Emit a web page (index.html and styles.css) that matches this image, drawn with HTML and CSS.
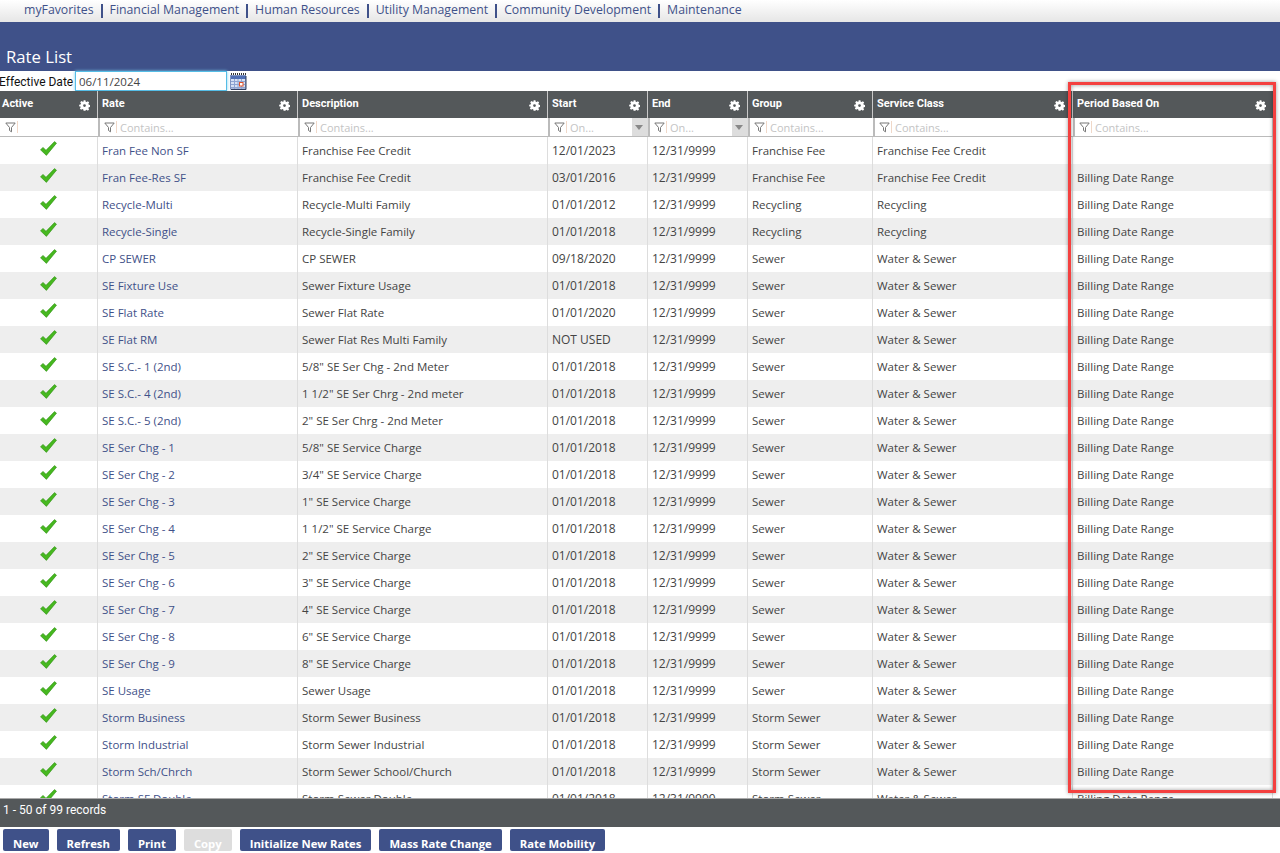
FILE: index.html
```html
<!DOCTYPE html>
<html lang="en">
<head>
  <meta charset="UTF-8" />
  <meta name="viewport" content="width=device-width, initial-scale=1.0" />
  <title>Rate List</title>
  <link rel="stylesheet" href="styles.css">
</head>
<body>
  <svg class="defs" width="0" height="0">
    <symbol id="gear" viewBox="0 0 12 12">
      <path fill="#fff" fill-rule="evenodd" d="M5 .2h2l.3 1.600 1.100.5 1.300-.9 1.400 1.400-.9 1.300.5 1.100 1.500.3v2l-1.500.3-.5 1.100.9 1.300-1.400 1.400-1.300-.9-1.100.5L7 11.800H5l-.3-1.500-1.100-.5-1.300.9-1.400-1.400.9-1.300-.5-1.100L.2 7.200v-2l1.500-.3.5-1.100-.9-1.300L2.700 1.100l1.300.9 1.100-.5zM6 4.500a1.500 1.500 0 1 0 0 3 1.500 1.500 0 0 0 0-3z"/>
    </symbol>
    <symbol id="funnel" viewBox="0 0 11 11">
      <path fill="none" stroke="#777" d="M.8 1h9.400L6.500 5.500v4.300L4.500 8.500v-3z"/>
    </symbol>
    <symbol id="check" viewBox="0 0 17 15">
      <path fill="#46b81f" stroke="#2f8f14" stroke-width=".6" d="M.5 8.800L3 6.400l3 2.900L14.500.6 16.500 2.200 6.400 14.400z"/>
    </symbol>
  </svg>

  <div class="page">
    <nav class="topnav">
      <a>myFavorites</a>
      <a>Financial Management</a>
      <a>Human Resources</a>
      <a>Utility Management</a>
      <a>Community Development</a>
      <a>Maintenance</a>
    </nav>
    <header class="banner"><h1>Rate List</h1></header>

    <div class="date-row">
      <label>Effective Date</label>
      <input class="date-input" type="text" value="06/11/2024" />
      <svg class="cal" width="17" height="17" viewBox="0 0 17 17">
        <path fill="none" stroke="#333" stroke-dasharray="1 1" d="M1 .5h15M1 1.500h15"/>
        <rect x=".5" y="2.500" width="15" height="13.500" fill="#d5e0f3" stroke="#7f93c0"/>
        <rect x="1" y="3" width="15" height="3" fill="#4f6fb5"/>
        <path fill="none" stroke="#8ea4d2" d="M1 8.500h15M1 11.500h15M1 14.500h15M4.500 6v10M8 6v10M11.500 6v10"/>
        <path fill="none" stroke="#33405f" d="M16 3v13.500H1"/>
        <rect x="9.500" y="9.500" width="3.500" height="3.500" fill="#fff" stroke="#e0522a"/>
      </svg>
    </div>

    <div class="grid-wrap">
      <table class="grid">
        <colgroup>
          <col class="c-active"><col class="c-rate"><col class="c-desc"><col class="c-date"><col class="c-date"><col class="c-group"><col class="c-wide"><col class="c-wide">
        </colgroup>
        <thead>
          <tr class="head-row">
            <th>Active<svg class="gear"><use href="#gear"/></svg></th>
            <th>Rate<svg class="gear"><use href="#gear"/></svg></th>
            <th>Description<svg class="gear"><use href="#gear"/></svg></th>
            <th>Start<svg class="gear"><use href="#gear"/></svg></th>
            <th>End<svg class="gear"><use href="#gear"/></svg></th>
            <th>Group<svg class="gear"><use href="#gear"/></svg></th>
            <th>Service Class<svg class="gear"><use href="#gear"/></svg></th>
            <th>Period Based On<svg class="gear"><use href="#gear"/></svg></th>
          </tr>
          <tr class="filter-row">
            <td><svg class="funnel"><use href="#funnel"/></svg><i class="pipe"></i></td>
            <td><svg class="funnel"><use href="#funnel"/></svg><i class="pipe"></i>Contains...</td>
            <td><svg class="funnel"><use href="#funnel"/></svg><i class="pipe"></i>Contains...</td>
            <td><svg class="funnel"><use href="#funnel"/></svg><i class="pipe"></i>On...<span class="drop"></span></td>
            <td><svg class="funnel"><use href="#funnel"/></svg><i class="pipe"></i>On...<span class="drop"></span></td>
            <td><svg class="funnel"><use href="#funnel"/></svg><i class="pipe"></i>Contains...</td>
            <td><svg class="funnel"><use href="#funnel"/></svg><i class="pipe"></i>Contains...</td>
            <td><svg class="funnel"><use href="#funnel"/></svg><i class="pipe"></i>Contains...</td>
          </tr>
        </thead>
        <tbody>
          <tr><td class="ok"><svg class="check"><use href="#check"/></svg></td><td><a>Fran Fee Non SF</a></td><td>Franchise Fee Credit</td><td>12/01/2023</td><td>12/31/9999</td><td>Franchise Fee</td><td>Franchise Fee Credit</td><td></td></tr>
          <tr><td class="ok"><svg class="check"><use href="#check"/></svg></td><td><a>Fran Fee-Res SF</a></td><td>Franchise Fee Credit</td><td>03/01/2016</td><td>12/31/9999</td><td>Franchise Fee</td><td>Franchise Fee Credit</td><td>Billing Date Range</td></tr>
          <tr><td class="ok"><svg class="check"><use href="#check"/></svg></td><td><a>Recycle-Multi</a></td><td>Recycle-Multi Family</td><td>01/01/2012</td><td>12/31/9999</td><td>Recycling</td><td>Recycling</td><td>Billing Date Range</td></tr>
          <tr><td class="ok"><svg class="check"><use href="#check"/></svg></td><td><a>Recycle-Single</a></td><td>Recycle-Single Family</td><td>01/01/2018</td><td>12/31/9999</td><td>Recycling</td><td>Recycling</td><td>Billing Date Range</td></tr>
          <tr><td class="ok"><svg class="check"><use href="#check"/></svg></td><td><a>CP SEWER</a></td><td>CP SEWER</td><td>09/18/2020</td><td>12/31/9999</td><td>Sewer</td><td>Water &amp; Sewer</td><td>Billing Date Range</td></tr>
          <tr><td class="ok"><svg class="check"><use href="#check"/></svg></td><td><a>SE Fixture Use</a></td><td>Sewer Fixture Usage</td><td>01/01/2018</td><td>12/31/9999</td><td>Sewer</td><td>Water &amp; Sewer</td><td>Billing Date Range</td></tr>
          <tr><td class="ok"><svg class="check"><use href="#check"/></svg></td><td><a>SE Flat Rate</a></td><td>Sewer Flat Rate</td><td>01/01/2020</td><td>12/31/9999</td><td>Sewer</td><td>Water &amp; Sewer</td><td>Billing Date Range</td></tr>
          <tr><td class="ok"><svg class="check"><use href="#check"/></svg></td><td><a>SE Flat RM</a></td><td>Sewer Flat Res Multi Family</td><td>NOT USED</td><td>12/31/9999</td><td>Sewer</td><td>Water &amp; Sewer</td><td>Billing Date Range</td></tr>
          <tr><td class="ok"><svg class="check"><use href="#check"/></svg></td><td><a>SE S.C.- 1 (2nd)</a></td><td>5/8" SE Ser Chg - 2nd Meter</td><td>01/01/2018</td><td>12/31/9999</td><td>Sewer</td><td>Water &amp; Sewer</td><td>Billing Date Range</td></tr>
          <tr><td class="ok"><svg class="check"><use href="#check"/></svg></td><td><a>SE S.C.- 4 (2nd)</a></td><td>1 1/2" SE Ser Chrg - 2nd meter</td><td>01/01/2018</td><td>12/31/9999</td><td>Sewer</td><td>Water &amp; Sewer</td><td>Billing Date Range</td></tr>
          <tr><td class="ok"><svg class="check"><use href="#check"/></svg></td><td><a>SE S.C.- 5 (2nd)</a></td><td>2" SE Ser Chrg - 2nd Meter</td><td>01/01/2018</td><td>12/31/9999</td><td>Sewer</td><td>Water &amp; Sewer</td><td>Billing Date Range</td></tr>
          <tr><td class="ok"><svg class="check"><use href="#check"/></svg></td><td><a>SE Ser Chg - 1</a></td><td>5/8" SE Service Charge</td><td>01/01/2018</td><td>12/31/9999</td><td>Sewer</td><td>Water &amp; Sewer</td><td>Billing Date Range</td></tr>
          <tr><td class="ok"><svg class="check"><use href="#check"/></svg></td><td><a>SE Ser Chg - 2</a></td><td>3/4" SE Service Charge</td><td>01/01/2018</td><td>12/31/9999</td><td>Sewer</td><td>Water &amp; Sewer</td><td>Billing Date Range</td></tr>
          <tr><td class="ok"><svg class="check"><use href="#check"/></svg></td><td><a>SE Ser Chg - 3</a></td><td>1" SE Service Charge</td><td>01/01/2018</td><td>12/31/9999</td><td>Sewer</td><td>Water &amp; Sewer</td><td>Billing Date Range</td></tr>
          <tr><td class="ok"><svg class="check"><use href="#check"/></svg></td><td><a>SE Ser Chg - 4</a></td><td>1 1/2" SE Service Charge</td><td>01/01/2018</td><td>12/31/9999</td><td>Sewer</td><td>Water &amp; Sewer</td><td>Billing Date Range</td></tr>
          <tr><td class="ok"><svg class="check"><use href="#check"/></svg></td><td><a>SE Ser Chg - 5</a></td><td>2" SE Service Charge</td><td>01/01/2018</td><td>12/31/9999</td><td>Sewer</td><td>Water &amp; Sewer</td><td>Billing Date Range</td></tr>
          <tr><td class="ok"><svg class="check"><use href="#check"/></svg></td><td><a>SE Ser Chg - 6</a></td><td>3" SE Service Charge</td><td>01/01/2018</td><td>12/31/9999</td><td>Sewer</td><td>Water &amp; Sewer</td><td>Billing Date Range</td></tr>
          <tr><td class="ok"><svg class="check"><use href="#check"/></svg></td><td><a>SE Ser Chg - 7</a></td><td>4" SE Service Charge</td><td>01/01/2018</td><td>12/31/9999</td><td>Sewer</td><td>Water &amp; Sewer</td><td>Billing Date Range</td></tr>
          <tr><td class="ok"><svg class="check"><use href="#check"/></svg></td><td><a>SE Ser Chg - 8</a></td><td>6" SE Service Charge</td><td>01/01/2018</td><td>12/31/9999</td><td>Sewer</td><td>Water &amp; Sewer</td><td>Billing Date Range</td></tr>
          <tr><td class="ok"><svg class="check"><use href="#check"/></svg></td><td><a>SE Ser Chg - 9</a></td><td>8" SE Service Charge</td><td>01/01/2018</td><td>12/31/9999</td><td>Sewer</td><td>Water &amp; Sewer</td><td>Billing Date Range</td></tr>
          <tr><td class="ok"><svg class="check"><use href="#check"/></svg></td><td><a>SE Usage</a></td><td>Sewer Usage</td><td>01/01/2018</td><td>12/31/9999</td><td>Sewer</td><td>Water &amp; Sewer</td><td>Billing Date Range</td></tr>
          <tr><td class="ok"><svg class="check"><use href="#check"/></svg></td><td><a>Storm Business</a></td><td>Storm Sewer Business</td><td>01/01/2018</td><td>12/31/9999</td><td>Storm Sewer</td><td>Water &amp; Sewer</td><td>Billing Date Range</td></tr>
          <tr><td class="ok"><svg class="check"><use href="#check"/></svg></td><td><a>Storm Industrial</a></td><td>Storm Sewer Industrial</td><td>01/01/2018</td><td>12/31/9999</td><td>Storm Sewer</td><td>Water &amp; Sewer</td><td>Billing Date Range</td></tr>
          <tr><td class="ok"><svg class="check"><use href="#check"/></svg></td><td><a>Storm Sch/Chrch</a></td><td>Storm Sewer School/Church</td><td>01/01/2018</td><td>12/31/9999</td><td>Storm Sewer</td><td>Water &amp; Sewer</td><td>Billing Date Range</td></tr>
          <tr><td class="ok"><svg class="check"><use href="#check"/></svg></td><td><a>Storm SF Double</a></td><td>Storm Sewer Double</td><td>01/01/2018</td><td>12/31/9999</td><td>Storm Sewer</td><td>Water &amp; Sewer</td><td>Billing Date Range</td></tr>
        </tbody>
      </table>
    </div>

    <div class="pager">1 - 50 of 99 records</div>

    <div class="actions">
      <button>New</button>
      <button>Refresh</button>
      <button>Print</button>
      <button class="off">Copy</button>
      <button>Initialize New Rates</button>
      <button>Mass Rate Change</button>
      <button>Rate Mobility</button>
    </div>
  </div>

  <!-- annotation drawn over the last column -->
  <div class="callout"></div>
</body>
</html>
```

FILE: styles.css
```css
* { box-sizing: border-box; }
html, body { margin: 0; padding: 0; height: 100%; overflow: hidden; background: #fff; }
body { font-family: "Open Sans", sans-serif; font-size: 12px; color: #444; }
.defs { position: absolute; }

.page {
  height: 853px;
  display: flex;
  flex-direction: column;
  overflow: hidden;
}

/* Top menu */
.topnav {
  flex: 0 0 22px;
  display: flex;
  align-items: flex-start;
  padding: 2px 0 0 24px;
  background: linear-gradient(#fff, #e6e6e6);
  font-size: 12.300px;
  line-height: 16px;
  color: #3f5189;
}
.topnav a { padding-right: 8px; margin-right: 8px; position: relative; }
.topnav a:not(:last-child)::after {
  content: "";
  position: absolute;
  right: -1px;
  top: 2px;
  width: 2px;
  height: 14px;
  background: #3f5189;
}

.banner {
  flex: 0 0 49px;
  display: flex;
  align-items: flex-end;
  background: #3f5189;
  padding: 0 0 2px 6px;
}
.banner h1 { margin: 0; font-size: 16.700px; line-height: 24px; font-weight: 400; color: #fff; }

/* Effective date */
.date-row {
  flex: 0 0 20px;
  display: flex;
  align-items: center;
  color: #111;
}
.date-row label { font-family: Roboto, sans-serif; font-size: 12px; margin-left: -1px; padding-top: 1px; width: 76px; white-space: nowrap; }
.date-input {
  width: 152px;
  height: 20px;
  padding: 0 3px;
  border: 1px solid #55bde6;
  box-shadow: 0 0 3px #7fd0f0;
  font-family: "Open Sans", sans-serif;
  font-size: 11.500px;
  color: #444;
  outline: none;
}
.cal { margin-left: 3px; }

/* Grid */
.grid-wrap { flex: 1; overflow: hidden; min-height: 0; }
.grid { table-layout: fixed; border-collapse: separate; border-spacing: 0; width: 1273px; }
.c-active { width: 98px; }
.c-rate { width: 200px; }
.c-desc { width: 250px; }
.c-date { width: 100px; }
.c-group { width: 125px; }
.c-wide { width: 200px; }

.head-row th {
  position: relative;
  height: 27px;
  padding: 0 0 3px 4px;
  background: #54585a;
  border-right: 1px solid #c8c8c8;
  font-family: Roboto, sans-serif;
  font-size: 11px;
  font-weight: 700;
  color: #fff;
  text-align: left;
}
.head-row th:first-child { padding-left: 2px; }
.head-row th:last-child { border-right: 0; }
.gear { position: absolute; right: 7px; top: 9px; width: 11px; height: 11px; }

.filter-row td {
  position: relative;
  height: 19px;
  padding: 0 0 0 20px;
  background: #fff;
  border-left: 2px solid #bbb;
  border-bottom: 1px solid #bbb;
  color: #c4c4c4;
  font-size: 11px;
  white-space: nowrap;
}
.filter-row td:first-child { border-left: 0; }
.filter-row td:last-child { border-right: 1px solid #ccc; }
.funnel { position: absolute; left: 4px; top: 4px; width: 11px; height: 11px; }
.filter-row td:first-child .funnel { left: 5px; }
.pipe { position: absolute; left: 16px; top: 3px; width: 1px; height: 12px; background: #f0d8c8; }
.filter-row td:first-child .pipe { left: 17px; }
.drop {
  position: absolute;
  right: 0;
  top: 0;
  bottom: 0;
  width: 16px;
  background: #ddd;
}
.drop::after {
  content: "";
  position: absolute;
  left: 3px;
  top: 7px;
  border: 4px solid transparent;
  border-top: 5px solid #888;
  border-bottom: 0;
}

tbody td {
  height: 27px;
  padding: 0 4px;
  border-right: 1px solid #ddd;
  font-size: 11.500px;
  line-height: 27px;
  white-space: nowrap;
  overflow: hidden;
}
tbody td:nth-child(4), tbody td:nth-child(5) { font-size: 12px; }
tbody tr:nth-child(even) td { background: #eee; }
tbody a { color: #3f5189; }
td.ok { text-align: center; padding: 0 1px 0 0; }
.check { width: 17px; height: 15px; vertical-align: -1px; }

/* Footer */
.pager {
  flex: 0 0 29px;
  padding: 4px 0 0 3px;
  background: #54585a;
  border-top: 1px solid #aaa;
  font-family: Roboto, sans-serif;
  font-size: 12px;
  color: #fff;
}
.actions {
  flex: 0 0 26px;
  display: flex;
  gap: 8px;
  padding: 2px 0 0 3px;
  overflow: hidden;
}
.actions button {
  height: 22px;
  padding: 7px 10px 0;
  border: 0;
  border-radius: 2px;
  background: #3f5189;
  color: #fff;
  font-family: "Open Sans", sans-serif;
  font-size: 11.300px;
  font-weight: 700;
  line-height: 14px;
  overflow: hidden;
}
.actions .off { background: #ddd; }

/* Red annotation */
.callout {
  position: absolute;
  left: 1068px;
  top: 82px;
  width: 208px;
  height: 711px;
  border: 3px solid #f4403f;
  box-shadow: 0 0 4px rgba(0, 0, 0, .4), inset 0 0 4px rgba(0, 0, 0, .4);
}
```
